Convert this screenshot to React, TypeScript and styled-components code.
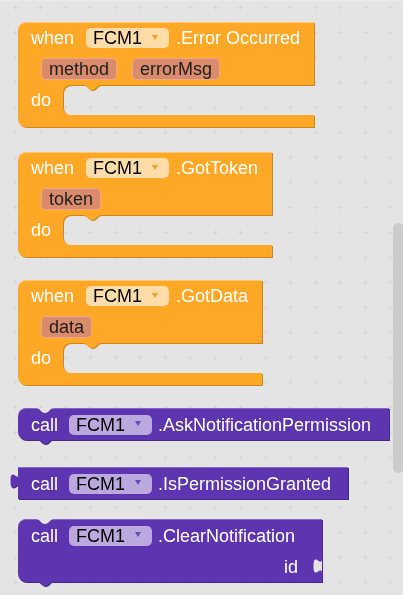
import styled, { createGlobalStyle } from "styled-components"

const WORKSPACE = "#e4e4e4"

const tones = {
  event: { base: "#ffa726", dark: "#cc861e", light: "#ffc771", field: "#ffdca8", arrow: "#f59f2a" },
  call: { base: "#5e35b1", dark: "#46288a", light: "#8366c6", field: "#bba8df", arrow: "#6a47b6" },
}
type Tone = keyof typeof tones

const gridTile = encodeURIComponent(
  `<svg xmlns="http://www.w3.org/2000/svg" width="25" height="25"><rect x="10" y="12" width="5" height="1" fill="#d6d6d6"/><rect x="12" y="10" width="1" height="5" fill="#d6d6d6"/></svg>`
)

const GlobalStyle = createGlobalStyle`
  html, body {
    margin: 0;
    padding: 0;
  }
  body {
    background: ${WORKSPACE};
    font-family: "Liberation Sans", Arial, sans-serif;
  }
`

const Workspace = styled.div`
  position: relative;
  width: 403px;
  height: 595px;
  box-sizing: border-box;
  overflow: hidden;
  display: flex;
  flex-direction: column;
  align-items: flex-start;
  padding-left: 18px;
  border-top: 1px solid #ececec;
  background-color: ${WORKSPACE};
  background-image: url("data:image/svg+xml,${gridTile}");
  background-position: 3px -6px;
`

const Scrollbar = styled.div`
  position: absolute;
  top: 222px;
  right: 0;
  width: 10px;
  height: 250px;
  border-radius: 5px;
  background: #cbcbcb;
`

/* ---------- shared text bits ---------- */

const Label = styled.span`
  color: #ffffff;
  font-size: 18px;
  line-height: 20px;
  white-space: nowrap;
`

const Dropdown = styled.span<{ $tone: Tone }>`
  display: inline-flex;
  align-items: center;
  height: 20px;
  padding: 0 11px 0 7px;
  margin: 0 7px 0 12px;
  border-radius: 5px;
  background: ${({ $tone }) => tones[$tone].field};
  color: #000000;
  font-size: 18px;
  line-height: 20px;
  white-space: nowrap;
  &::after {
    content: "";
    margin: -2px 0 0 10px;
    border-left: 3px solid transparent;
    border-right: 3px solid transparent;
    border-top: 5px solid ${({ $tone }) => tones[$tone].arrow};
  }
`

const Param = styled.span`
  height: 22px;
  box-sizing: border-box;
  padding: 0 7px;
  border: 1px solid #eaa98c;
  border-radius: 5px;
  background: #d98b6c;
  color: #1e1e1e;
  font-size: 18px;
  line-height: 20px;
`

/* ---------- event (when ... do) block ---------- */

const EventShell = styled.div<{ $width: number; $top: number }>`
  position: relative;
  display: flex;
  flex-direction: column;
  width: ${({ $width }) => $width}px;
  margin-top: ${({ $top }) => $top}px;
  filter: drop-shadow(1px 1px 0 ${tones.event.dark});
`

const HatRow = styled.div`
  display: flex;
  align-items: center;
  height: 31px;
  box-sizing: border-box;
  padding-left: 13px;
  background: ${tones.event.base};
  border-top: 1px solid ${tones.event.light};
  border-radius: 8px 0 0 0;
`

const ParamRow = styled.div`
  display: flex;
  align-items: center;
  gap: 15px;
  height: 32px;
  padding-left: 23px;
  background: ${tones.event.base};
`

const DoRow = styled.div`
  display: flex;
  height: 30px;
  overflow: hidden;
`

const DoLabel = styled(Label)`
  flex: none;
  width: 45px;
  box-sizing: border-box;
  padding-left: 13px;
  display: flex;
  align-items: center;
  background: ${tones.event.base};
`

const Slot = styled.div`
  position: relative;
  flex: 1;
  border-radius: 8px 0 0 8px;
  box-shadow: 0 0 0 10px ${tones.event.base};
`

const BottomArm = styled.div`
  height: 12px;
  background: ${tones.event.base};
  border-radius: 0 0 0 8px;
`

const Notch = styled.svg<{ $left: number; $edge: "top" | "bottom" | "hole" }>`
  position: absolute;
  left: ${({ $left }) => $left}px;
  ${({ $edge }) => ($edge === "bottom" ? "bottom: -5px;" : $edge === "hole" ? "top: -1px;" : "top: 0;")}
`

function NotchShape({ left, edge, fill }: { left: number; edge: "top" | "bottom" | "hole"; fill: string }) {
  return (
    <Notch $left={left} $edge={edge} width="18" height="6" viewBox="0 0 18 6">
      <path d="M0 0 C4 0 5 5 9 5 C13 5 14 0 18 0 Z" fill={fill} />
    </Notch>
  )
}

function EventBlock({ width, top, name, params }: { width: number; top: number; name: string; params: string[] }) {
  return (
    <EventShell $width={width} $top={top}>
      <HatRow>
        <Label>when</Label>
        <Dropdown $tone="event">FCM1</Dropdown>
        <Label>{name}</Label>
      </HatRow>
      <ParamRow>
        {params.map((p) => (
          <Param key={p}>{p}</Param>
        ))}
      </ParamRow>
      <DoRow>
        <DoLabel>do</DoLabel>
        <Slot>
          <NotchShape left={20} edge="top" fill={tones.event.base} />
        </Slot>
      </DoRow>
      <BottomArm />
    </EventShell>
  )
}

/* ---------- call blocks ---------- */

const CallShell = styled.div<{ $width: number; $top: number; $square?: boolean }>`
  position: relative;
  width: ${({ $width }) => $width}px;
  margin-top: ${({ $top }) => $top}px;
  box-sizing: border-box;
  background: ${tones.call.base};
  border-top: 1px solid ${tones.call.light};
  border-radius: ${({ $square }) => ($square ? "0" : "8px 0 0 8px")};
  filter: drop-shadow(1px 1px 0 ${tones.call.dark});
`

const CallRow = styled.div<{ $end?: boolean }>`
  position: relative;
  display: flex;
  align-items: center;
  height: 31px;
  padding: ${({ $end }) => ($end ? "0 24px 0 0" : "0 0 0 13px")};
  justify-content: ${({ $end }) => ($end ? "flex-end" : "flex-start")};
`

const CallDropdown = styled(Dropdown)`
  margin: 0 6px 0 11px;
`

const Tab = styled.svg<{ $side: "left" | "right" }>`
  position: absolute;
  top: ${({ $side }) => ($side === "left" ? "5px" : "7px")};
  ${({ $side }) => ($side === "left" ? "left: -9px;" : "right: 0;")}
`

function PuzzleTab({ side, fill }: { side: "left" | "right"; fill: string }) {
  return (
    <Tab $side={side} width="10" height="16" viewBox="-9.5 -0.5 10 16">
      <path d="M0.5 0 C0.5 10 -8 -8 -8 7.5 S0.5 5 0.5 15 Z" fill={fill} />
    </Tab>
  )
}

function CallBlock({
  width,
  top,
  name,
  output,
  argument,
}: {
  width: number
  top: number
  name: string
  output?: boolean
  argument?: string
}) {
  return (
    <CallShell $width={width} $top={top} $square={output}>
      {!output && <NotchShape left={18} edge="hole" fill={WORKSPACE} />}
      {output && <PuzzleTab side="left" fill={tones.call.base} />}
      <CallRow>
        <Label>call</Label>
        <CallDropdown $tone="call">FCM1</CallDropdown>
        <Label>{name}</Label>
      </CallRow>
      {argument && (
        <CallRow $end>
          <Label>{argument}</Label>
          <PuzzleTab side="right" fill={WORKSPACE} />
        </CallRow>
      )}
      {!output && <NotchShape left={18} edge="bottom" fill={tones.call.base} />}
    </CallShell>
  )
}

export default function App() {
  return (
    <>
      <GlobalStyle />
      <Workspace>
        <EventBlock width={296} top={21} name=".Error Occurred" params={["method", "errorMsg"]} />
        <EventBlock width={254} top={25} name=".GotToken" params={["token"]} />
        <EventBlock width={244} top={23} name=".GotData" params={["data"]} />
        <CallBlock width={371} top={23} name=".AskNotificationPermission" />
        <CallBlock width={330} top={27} name=".IsPermissionGranted" output />
        <CallBlock width={304} top={20} name=".ClearNotification" argument="id" />
        <Scrollbar />
      </Workspace>
    </>
  )
}
